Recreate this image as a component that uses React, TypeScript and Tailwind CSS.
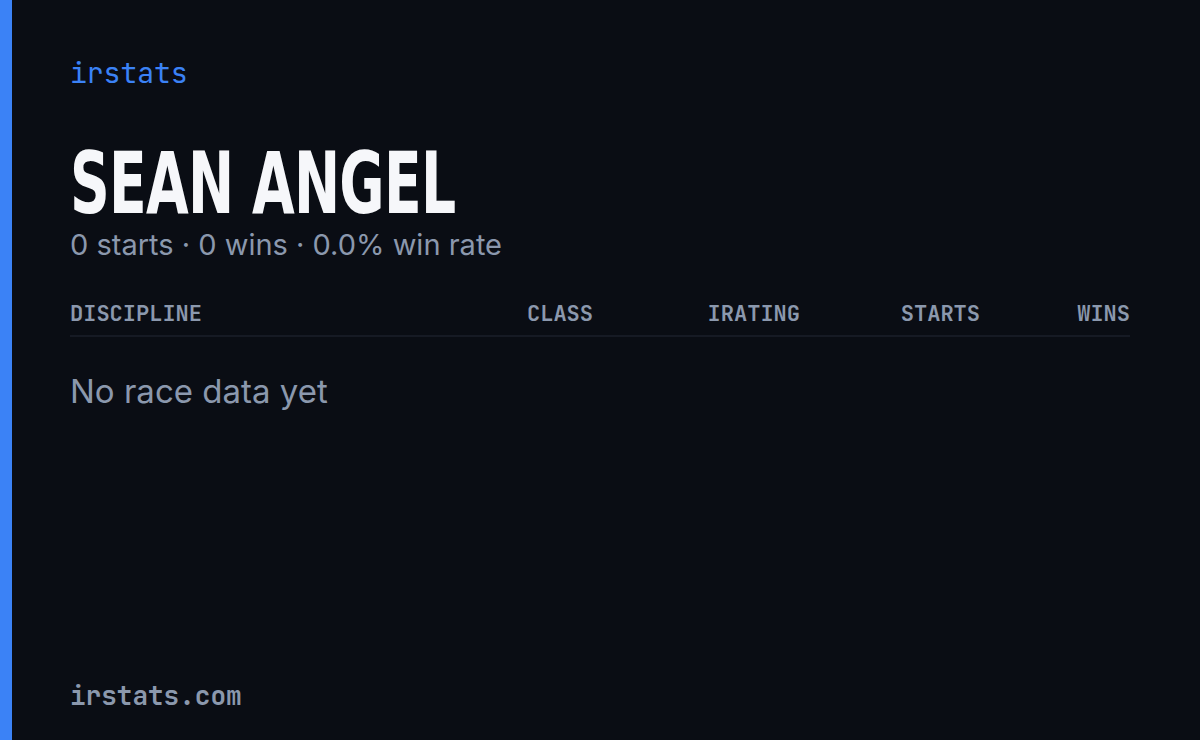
import React from 'react';

const columns = [
  { label: 'DISCIPLINE', align: 'text-left' },
  { label: 'CLASS', align: 'text-right' },
  { label: 'IRATING', align: 'text-right' },
  { label: 'STARTS', align: 'text-right' },
  { label: 'WINS', align: 'text-right' },
];

const mono = "font-['JetBrains_Mono','DejaVu_Sans_Mono','Liberation_Mono',monospace]";

export default function App() {
  return (
    <div className="flex h-[740px] w-[1200px] bg-[#0a0d14] font-['Inter','Noto_Sans',sans-serif]">
      {/* accent strip */}
      <div className="w-3 shrink-0 bg-[#3b82f6]" />

      <div className="flex flex-1 flex-col pl-[58px] pr-[70px] pt-[53px] pb-[26px]">
        <div className={`${mono} text-[28px] leading-[40px] text-[#3b82f6]`}>irstats</div>

        <h1 className="mt-[40px] origin-left scale-x-[0.713] whitespace-nowrap font-['DejaVu_Sans_Condensed',sans-serif] text-[86px] font-bold leading-[100px] tracking-[-1px] text-[#f6f7fa]">
          SEAN ANGEL
        </h1>
        <p className="-mt-[6px] text-[29px] leading-[36px] text-[#8b98ad]">
          0 starts · 0 wins · 0.0% win rate
        </p>

        <div className="mt-[37px]">
          <div className={`grid grid-cols-[1fr_120px_207px_180px_150px] border-b-2 border-[#161a24] pb-[7px] ${mono} text-[22px] font-semibold leading-[28px] text-[#8b98ad]`}>
            {columns.map((c) => (
              <div key={c.label} className={c.align}>
                {c.label}
              </div>
            ))}
          </div>
          <div className="pt-[34px] text-[33px] leading-[40px] text-[#8b98ad]">No race data yet</div>
        </div>

        <div className={`mt-auto ${mono} text-[26px] font-semibold leading-[36px] text-[#8b98ad]`}>irstats.com</div>
      </div>
    </div>
  );
}
